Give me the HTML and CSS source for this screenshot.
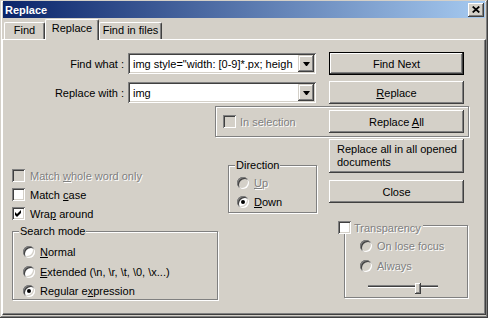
FILE: index.html
```html
<!DOCTYPE html>
<html lang="en">
<head>
    <meta charset="UTF-8">
    <title>Replace</title>
    <link rel="stylesheet" href="styles.css">
</head>
<body>

    <div class="window">
        <div class="titlebar">
            <span class="title">Replace</span>
            <div class="close-btn">
                <svg width="8" height="7" viewBox="0 0 8 7"><path d="M0.7 0.5 L7.3 6.5 M7.3 0.5 L0.7 6.5" stroke="#000" stroke-width="1.7" fill="none"/></svg>
            </div>
        </div>

        <div class="tabs">
            <div class="tab tab-find">Find</div>
            <div class="tab tab-replace">Replace</div>
            <div class="tab tab-files">Find in files</div>
        </div>

        <div class="panel">
            <div class="field-row">
                <span class="field-label">Find what :</span>
                <div class="combo">
                    <span class="combo-text">img style="width: [0-9]*.px; heigh</span>
                    <span class="combo-arrow"></span>
                </div>
                <button class="btn btn-default">Find Next</button>
            </div>
            <div class="field-row">
                <span class="field-label">Replace with :</span>
                <div class="combo">
                    <span class="combo-text">img</span>
                    <span class="combo-arrow"></span>
                </div>
                <button class="btn"><u>R</u>eplace</button>
            </div>

            <div class="selection-box">
                <div class="option option-tight">
                    <span class="checkbox disabled"></span>
                    <span class="muted">In selection</span>
                </div>
                <button class="btn">Replace <u>A</u>ll</button>
            </div>

            <div class="lower">
                <div class="left-col">
                    <div class="option">
                        <span class="checkbox disabled"></span>
                        <span class="muted">Match <u>w</u>hole word only</span>
                    </div>
                    <div class="option">
                        <span class="checkbox"></span>
                        <span>Match <u>c</u>ase</span>
                    </div>
                    <div class="option">
                        <span class="checkbox">
                            <svg width="13" height="13" viewBox="0 0 13 13"><path d="M3 5 L5 7 L9 3 L9 6 L5 10 L3 8 Z" fill="#000"/></svg>
                        </span>
                        <span>Wra<u>p</u> around</span>
                    </div>

                    <div class="group search-group">
                        <div class="group-title">Search mode</div>
                        <div class="radio-list">
                            <div class="option"><span class="radio"></span><span><u>N</u>ormal</span></div>
                            <div class="option"><span class="radio"></span><span><u>E</u>xtended (\n, \r, \t, \0, \x...)</span></div>
                            <div class="option"><span class="radio checked"></span><span>Regular e<u>x</u>pression</span></div>
                        </div>
                    </div>
                </div>

                <div class="group direction-group">
                    <div class="group-title">Direction</div>
                    <div class="radio-list">
                        <div class="option"><span class="radio disabled"></span><span class="muted"><u>U</u>p</span></div>
                        <div class="option"><span class="radio checked"></span><span><u>D</u>own</span></div>
                    </div>
                </div>

                <div class="right-col">
                    <button class="btn btn-tall">Replace all in all opened<br>documents</button>
                    <button class="btn btn-close">Close</button>

                    <div class="group trans-group">
                        <div class="trans-title">
                            <span class="checkbox"></span>
                            <span class="muted">Transparency</span>
                        </div>
                        <div class="radio-list">
                            <div class="option"><span class="radio disabled"></span><span class="muted">On lose focus</span></div>
                            <div class="option"><span class="radio disabled"></span><span class="muted">Always</span></div>
                        </div>
                        <div class="slider">
                            <div class="slider-track"></div>
                            <div class="slider-thumb"></div>
                        </div>
                    </div>
                </div>
            </div>
        </div>
    </div>

</body>
</html>
```

FILE: styles.css
```css
html, body { margin: 0; background: #d4d0c8; }
body { font-family: Tahoma, "Liberation Sans", Arial, sans-serif; font-size: 11px; color: #000; }

/* window frame */
.window { width: 488px; height: 318px; box-sizing: border-box; padding: 1px 2px 3px 2px; background: #d4d0c8;
    box-shadow: inset -1px -1px #404040, inset 1px 1px #d4d0c8, inset -2px -2px #808080, inset 2px 2px #fff; }

.titlebar { height: 17px; margin: 0 1px; padding-left: 2px; display: flex; align-items: center; justify-content: space-between;
    background: linear-gradient(to right, #0a246a, #a6caf0); color: #fff; font-weight: bold; }
.close-btn { width: 16px; height: 14px; margin-right: 1px; display: flex; align-items: center; justify-content: center; background: #d4d0c8;
    box-shadow: inset -1px -1px #404040, inset 1px 1px #fff, inset -2px -2px #808080, inset 2px 2px #d4d0c8; }

/* tabs */
.tabs { display: flex; align-items: flex-end; height: 21px; margin: 1px 0 -1px 0; padding-left: 2px; position: relative; z-index: 1; }
.tab { height: 17px; margin-bottom: 1px; box-sizing: border-box; text-align: center; line-height: 15px; background: #d4d0c8;
    border-top: 1px solid #fff; border-left: 1px solid #fff; border-right: 1px solid #404040; box-shadow: inset -1px 0 #808080;
    border-radius: 2px 2px 0 0; }
.tab-find { width: 41px; }
.tab-replace { width: 54px; height: 21px; margin-bottom: 0; line-height: 17px; }
.tab-files { width: 63px; }

.panel { height: 276px; box-sizing: border-box; padding-top: 12px;
    border: 1px solid #fff; border-right-color: #404040; border-bottom-color: #404040; box-shadow: inset -1px -1px #808080; }

/* find / replace fields */
.field-row { display: flex; align-items: center; height: 23px; }
.field-row + .field-row { margin-top: 6px; }
.field-label { width: 121px; margin-right: 4px; text-align: right; }

.combo { width: 188px; height: 21px; box-sizing: border-box; padding: 2px; margin-right: 13px; display: flex; align-items: center; background: #fff;
    box-shadow: inset 1px 1px #808080, inset -1px -1px #fff, inset 2px 2px #404040, inset -2px -2px #d4d0c8; }
.combo-text { flex: 1; padding-left: 3px; white-space: nowrap; overflow: hidden; }
.combo-arrow { width: 16px; height: 17px; flex: none; display: flex; align-items: center; justify-content: center; background: #d4d0c8;
    box-shadow: inset -1px -1px #404040, inset 1px 1px #d4d0c8, inset -2px -2px #808080, inset 2px 2px #fff; }
.combo-arrow::after { content: ""; width: 1px; border-top: 4px solid #000; border-left: 3px solid transparent; border-right: 3px solid transparent; }

/* buttons */
.btn { width: 135px; height: 23px; padding: 0; border: 0; font: inherit; color: #000; background: #d4d0c8; flex: none;
    box-shadow: inset -1px -1px #404040, inset 1px 1px #fff, inset -2px -2px #808080, inset 2px 2px #d4d0c8; }
.btn-default { box-shadow: inset 0 0 0 1px #000, inset -2px -2px #404040, inset 2px 2px #fff, inset -3px -3px #808080; }
.btn-tall { display: block; height: 34px; padding-left: 8px; text-align: left; line-height: 13px; white-space: nowrap; }
.btn-close { display: block; margin-top: 7px; }

.selection-box { display: flex; align-items: center; justify-content: space-between; width: 254px; height: 31px; margin: 2px 0 0 212px;
    padding: 0 4px 0 7px; box-sizing: border-box; border: 1px solid #808080; box-shadow: inset 1px 1px #fff, 1px 1px #fff; }

/* checkboxes and radios */
.option { display: flex; align-items: center; gap: 5px; height: 13px; white-space: nowrap; }
.option-tight { gap: 4px; }
.muted { color: #808080; text-shadow: 1px 1px #fff; }

.checkbox { width: 13px; height: 13px; flex: none; background: #fff;
    box-shadow: inset 1px 1px #808080, inset -1px -1px #fff, inset 2px 2px #404040, inset -2px -2px #d4d0c8; }
.checkbox.disabled { background: #d4d0c8; }
.checkbox svg { display: block; }

.radio { width: 12px; height: 12px; flex: none; border-radius: 50%; background: #fff; position: relative;
    box-shadow: inset 1px 1px #808080, inset -1px -1px #fff, inset 2px 2px #404040, inset -2px -2px #d4d0c8; }
.radio.disabled { background: #d4d0c8; }
.radio.checked::after { content: ""; position: absolute; left: 4px; top: 4px; width: 4px; height: 4px; border-radius: 50%; background: #000; }

/* group boxes */
.group { box-sizing: border-box; border: 1px solid #808080; box-shadow: inset 1px 1px #fff, 1px 1px #fff; }
.group-title { display: table; margin: -7px 0 0 6px; padding: 0 1px; line-height: 13px; background: #d4d0c8; }
.radio-list .option { height: 12px; }

.lower { display: flex; align-items: flex-start; }

.left-col { width: 206px; margin: 32px 0 0 9px; }
.left-col > .option + .option { margin-top: 6px; }
.search-group { height: 69px; margin-top: 11px; }
.search-group .radio-list { padding: 8px 0 0 10px; }
.search-group .option + .option { margin-top: 8px; }
.search-group .option:last-child { margin-top: 7px; }

.direction-group { width: 89px; height: 48px; margin: 28px 0 0 10px; }
.direction-group .radio-list { padding: 5px 0 0 8px; }
.direction-group .option + .option { margin-top: 7px; }

.right-col { width: 140px; margin: 2px 0 0 12px; }

.trans-group { width: 124px; height: 73px; margin: 22px 0 0 15px; }
.trans-title { display: flex; align-items: center; gap: 3px; width: max-content; height: 13px; margin: -5px 0 0 -7px; padding-right: 2px; background: #d4d0c8; }
.trans-group .radio-list { padding: 6px 0 0 15px; }
.trans-group .option + .option { margin-top: 8px; }

.slider { position: relative; width: 70px; height: 11px; margin: 11px 0 0 23px; }
.slider-track { height: 1px; position: relative; top: 2px; background: #404040; border-top: 1px solid #808080; border-bottom: 1px solid #fff; }
.slider-thumb { position: absolute; left: 47px; top: 0; width: 6px; height: 11px; box-sizing: border-box; background: #d4d0c8;
    box-shadow: inset -1px -1px #404040, inset 1px 1px #fff, inset -2px -2px #808080; }
```
